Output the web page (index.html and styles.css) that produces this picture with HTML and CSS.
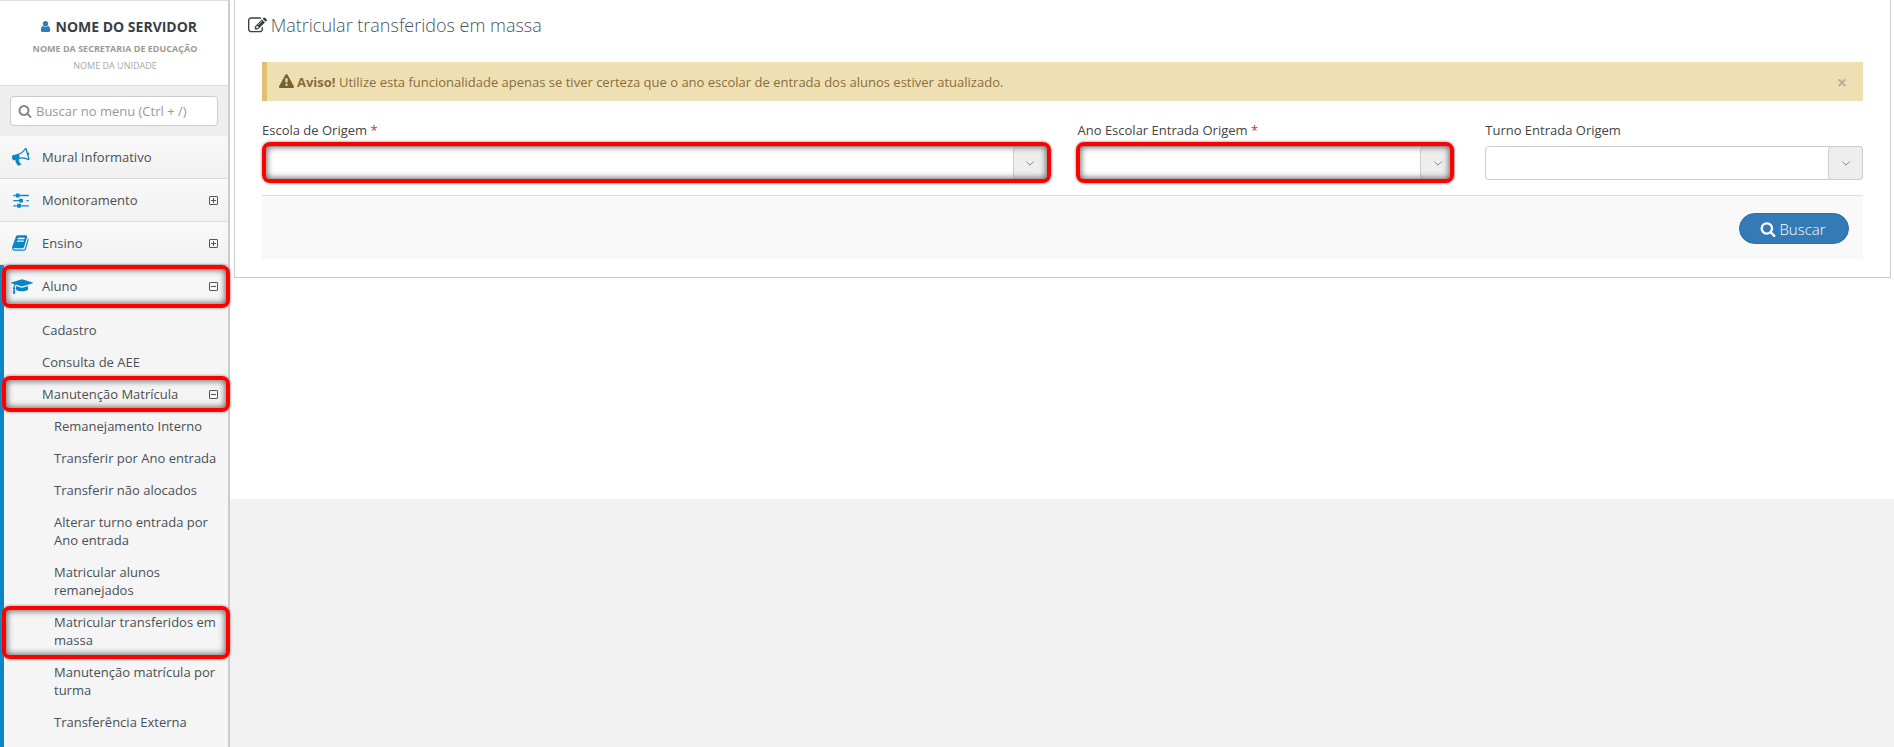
FILE: index.html
```html
<!DOCTYPE html>
<html lang="pt-BR">
<head>
<meta charset="utf-8">
<title>Matricular transferidos em massa</title>
<link rel="stylesheet" href="styles.css">
</head>
<body>
<div class="app">
  <aside class="sidebar">
    <div class="profile">
      <div class="profile-name"><svg class="ic-user" viewBox="0 0 1792 1792"><path d="M1536 1399q0 109-62.5 187t-150.5 78h-854q-88 0-150.5-78t-62.5-187q0-85 8.5-160.5t31.5-152 58.5-131 94-89 134.5-34.5q131 128 313 128t313-128q76 0 134.5 34.5t94 89 58.5 131 31.5 152 8.5 160.5zm-256-887q0 159-112.5 271.5t-271.5 112.5-271.5-112.5-112.5-271.5 112.5-271.5 271.5-112.5 271.5 112.5 112.5 271.5z"/></svg> NOME DO SERVIDOR</div>
      <div class="profile-dept">NOME DA SECRETARIA DE EDUCAÇÃO</div>
      <div class="profile-unit">NOME DA UNIDADE</div>
    </div>
    <div class="menu-search">
      <div class="search-box">
        <svg class="ic-search" viewBox="0 0 1792 1792"><path d="M1216 832q0-185-131.5-316.5t-316.5-131.5-316.5 131.5-131.5 316.5 131.5 316.5 316.5 131.5 316.5-131.5 131.5-316.5zm512 832q0 52-38 90t-90 38q-54 0-90-38l-343-342q-179 124-399 124-143 0-273.5-55.5t-225-150-150-225-55.5-273.5 55.5-273.5 150-225 225-150 273.5-55.5 273.5 55.5 225 150 150 225 55.5 273.5q0 220-124 399l343 343q37 37 37 90z"/></svg>
        <span>Buscar no menu (Ctrl + /)</span>
      </div>
    </div>
    <nav class="menu">
      <div class="menu-item">
        <svg class="menu-icon icon-tilt" viewBox="0 0 1792 1792"><path d="M1664 640q53 0 90.5 37.5t37.5 90.5-37.5 90.5-90.5 37.5v384q0 52-38 90t-90 38q-417-347-812-380-58 19-91 66t-31 100.5 40 92.5q-20 33-23 65.5t6 58 33.5 55 48 50 61.5 50.5q-29 58-111.5 83t-168.5 11.5-132-55.5q-7-23-29.5-87.5t-32-94.5-23-89-15-101 3.5-98.5 22-110.5h-122q-66 0-113-47t-47-113v-192q0-66 47-113t113-47h480q435 0 896-384 52 0 90 38t38 90v384zm-128 604v-954q-394 302-768 343v270q377 42 768 341z"/></svg>
        <span class="menu-label">Mural Informativo</span>
      </div>
      <div class="menu-item">
        <svg class="menu-icon" viewBox="0 0 1792 1792"><path d="M480 1408v128h-352v-128h352zm352-128q26 0 45 19t19 45v256q0 26-19 45t-45 19h-256q-26 0-45-19t-19-45v-256q0-26 19-45t45-19h256zm160-384v128h-864v-128h864zm-640-512v128h-224v-128h224zm1312 1024v128h-736v-128h736zm-960-1152q26 0 45 19t19 45v256q0 26-19 45t-45 19h-256q-26 0-45-19t-19-45v-256q0-26 19-45t45-19h256zm320 512q26 0 45 19t19 45v256q0 26-19 45t-45 19h-256q-26 0-45-19t-19-45v-256q0-26 19-45t45-19h256zm640 128v128h-224v-128h224zm0-512v128h-864v-128h864z"/></svg>
        <span class="menu-label">Monitoramento</span>
        <span class="toggle toggle-plus"></span>
      </div>
      <div class="menu-item">
        <svg class="menu-icon" viewBox="0 0 1792 1792"><path d="M1639 478q40 57 18 129l-275 906q-19 64-76.5 107.5t-122.5 43.5h-923q-77 0-148.5-53.5t-99.5-131.5q-24-67-2-127 0-4 3-27t4-37q1-8-3-21.5t-3-19.5q2-11 8-21t16.5-23.5 16.5-23.5q23-38 45-91.5t30-91.5q3-10 .5-30t-.5-28q3-11 17-28t17-23q21-36 42-92t25-90q1-9-2.5-32t.5-28q4-13 22-30.5t22-22.5q19-26 42.5-84.5t27.5-96.5q1-8-3-25.5t-2-26.5q2-8 9-18t18-23 17-21q8-12 16.5-30.5t15-35 16-36 19.5-32 26.5-23.5 36-11.5 47.5 5.5l-1 3q38-9 51-9h761q74 0 114 56t18 130l-274 906q-36 119-71.5 153.5t-128.5 34.5h-869q-27 0-38 15-11 16-1 43 24 70 144 70h923q29 0 56-15.5t35-41.5l300-987q7-22 5-57 38 15 59 43zm-1064 2q-4 13 2 22.5t20 9.5h608q13 0 25.5-9.5t16.5-22.5l21-64q4-13-2-22.5t-20-9.5h-608q-13 0-25.5 9.5t-16.5 22.5zm-83 256q-4 13 2 22.5t20 9.5h608q13 0 25.5-9.5t16.5-22.5l21-64q4-13-2-22.5t-20-9.5h-608q-13 0-25.5 9.5t-16.5 22.5z"/></svg>
        <span class="menu-label">Ensino</span>
        <span class="toggle toggle-plus"></span>
      </div>
      <div class="menu-item active hl hl-aluno">
        <svg class="menu-icon menu-icon-wide" viewBox="0 0 2304 1792"><path d="M1774 836l18 316q4 69-82 128t-235 93.5-323 34.5-323-34.5-235-93.5-82-128l18-316 574 181q22 7 48 7t48-7zm530-324q0 23-22 31l-1120 352q-4 1-10 1t-10-1l-652-206q-43 34-71 111.5t-34 178.5q63 36 63 109 0 69-58 107l58 433q2 14-8 25-9 11-24 11h-192q-15 0-24-11-10-11-8-25l58-433q-58-38-58-107 0-73 65-111 11-207 98-330l-333-104q-22-8-22-31t22-31l1120-352q4-1 10-1t10 1l1120 352q22 8 22 31z"/></svg>
        <span class="menu-label">Aluno</span>
        <span class="toggle"></span>
      </div>
      <div class="submenu">
        <div class="sub-item">Cadastro</div>
        <div class="sub-item">Consulta de AEE</div>
        <div class="sub-item sub-parent hl hl-manut">
          <span>Manutenção Matrícula</span>
          <span class="toggle"></span>
        </div>
        <div class="sub-item deep">Remanejamento Interno</div>
        <div class="sub-item deep">Transferir por Ano entrada</div>
        <div class="sub-item deep">Transferir não alocados</div>
        <div class="sub-item deep">Alterar turno entrada por Ano entrada</div>
        <div class="sub-item deep">Matricular alunos remanejados</div>
        <div class="sub-item deep hl hl-transf">Matricular transferidos em massa</div>
        <div class="sub-item deep">Manutenção matrícula por turma</div>
        <div class="sub-item deep">Transferência Externa</div>
      </div>
    </nav>
  </aside>
  <main class="main">
    <div class="content">
      <section class="panel">
        <h1 class="panel-title"><svg class="ic-edit" viewBox="0 0 1792 1792"><path d="M888 1184l116-116-152-152-116 116v56h96v96h56zm440-720q-16-16-33 1l-350 350q-17 17-1 33t33-1l350-350q17-17 1-33zm80 594v190q0 119-84.5 203.5t-203.5 84.5h-832q-119 0-203.5-84.5t-84.5-203.5v-832q0-119 84.5-203.5t203.5-84.5h832q63 0 117 25 15 7 18 23 3 17-9 29l-49 49q-14 14-32 8-23-6-45-6h-832q-66 0-113 47t-47 113v832q0 66 47 113t113 47h832q66 0 113-47t47-113v-126q0-13 9-22l64-64q15-15 35-7t20 29zm-96-738l288 288-672 672h-288v-288zm444 132l-92 92-288-288 92-92q28-28 68-28t68 28l152 152q28 28 28 68t-28 68z"/></svg> Matricular transferidos em massa</h1>
        <div class="alert">
          <svg class="ic-warn" viewBox="0 0 1792 1792"><path d="M1024 1375v-190q0-14-9.5-23.5t-22.5-9.5h-192q-13 0-22.5 9.5t-9.5 23.5v190q0 14 9.5 23.5t22.5 9.5h192q13 0 22.5-9.5t9.5-23.5zm-2-374l18-459q0-12-10-19-13-11-24-11h-220q-11 0-24 11-10 7-10 21l17 457q0 10 10 16.5t24 6.5h185q14 0 23.5-6.5t10.5-16.5zm-14-934l768 1408q35 63-2 126-17 29-46.5 46t-63.5 17h-1536q-34 0-63.5-17t-46.5-46q-37-63-2-126l768-1408q17-31 47-49t65-18 65 18 47 49z"/></svg>
          <span class="alert-text"><strong>Aviso!</strong> Utilize esta funcionalidade apenas se tiver certeza que o ano escolar de entrada dos alunos estiver atualizado.</span>
          <span class="alert-close">×</span>
        </div>
        <div class="form-row">
          <div class="field">
            <label class="field-label">Escola de Origem <em>*</em></label>
            <div class="select hl hl-sel1"><span class="select-arrow"><svg viewBox="0 0 12 8"><path d="M1.5 1.5 6 6 10.5 1.5"/></svg></span></div>
          </div>
          <div class="field">
            <label class="field-label">Ano Escolar Entrada Origem <em>*</em></label>
            <div class="select hl hl-sel2"><span class="select-arrow"><svg viewBox="0 0 12 8"><path d="M1.5 1.5 6 6 10.5 1.5"/></svg></span></div>
          </div>
          <div class="field">
            <label class="field-label">Turno Entrada Origem</label>
            <div class="select"><span class="select-arrow"><svg viewBox="0 0 12 8"><path d="M1.5 1.5 6 6 10.5 1.5"/></svg></span></div>
          </div>
        </div>
        <div class="form-footer">
          <button class="btn-search"><svg class="ic-btn" viewBox="0 0 1792 1792"><path d="M1216 832q0-185-131.5-316.5t-316.5-131.5-316.5 131.5-131.5 316.5 131.5 316.5 316.5 131.5 316.5-131.5 131.5-316.5zm512 832q0 52-38 90t-90 38q-54 0-90-38l-343-342q-179 124-399 124-143 0-273.5-55.5t-225-150-150-225-55.5-273.5 55.5-273.5 150-225 225-150 273.5-55.5 273.5 55.5 225 150 150 225 55.5 273.5q0 220-124 399l343 343q37 37 37 90z"/></svg> Buscar</button>
        </div>
      </section>
    </div>
    <div class="page-fill"></div>
  </main>
</div>
</body>
</html>
```

FILE: styles.css
```css
* { box-sizing: border-box; }
html, body { margin: 0; height: 100%; overflow: hidden; }
body { font-family: "Open Sans", "Noto Sans", sans-serif; font-size: 13px; color: #444; background: #fff; }
.app { display: flex; height: 747px; }

.sidebar { width: 230px; flex: none; background: #f5f5f5; border-right: 2px solid #ccc; border-top: 1px solid #ddd; }
.profile { height: 85px; background: #fff; border-bottom: 1px solid #ddd; padding: 16px 0 0 8px; text-align: center; }
.profile-name { font-size: 14px; font-weight: 700; color: #3a3f47; line-height: 20px; }
.ic-user { width: 13px; height: 13px; fill: #2a7fb8; vertical-align: -1px; }
.profile-dept { font-size: 9px; font-weight: 700; color: #a09a92; line-height: 14px; margin-top: 5px; padding-right: 6px; }
.profile-unit { font-size: 9px; color: #a8a8a8; line-height: 14px; margin-top: 3px; padding-right: 6px; }
.menu-search { height: 50px; background: #eee; padding: 10px 10px 0 10px; }
.search-box { height: 30px; background: #fff; border: 1px solid #ccc; border-radius: 4px; display: flex; align-items: center; padding-left: 7px; color: #999; font-size: 13px; gap: 4px; }
.ic-search { width: 14px; height: 14px; fill: #888; }

.menu-item { position: relative; height: 43px; display: flex; align-items: center; background: linear-gradient(#f9f9f9, #f1f1f1); border-bottom: 1px solid #ddd; padding: 0 10px 0 12px; }
.menu-icon { width: 18px; height: 18px; fill: #0a86c7; flex: none; }
.icon-tilt { transform: rotate(-15deg); }
.menu-icon-wide { width: 22px; height: 17px; margin-left: -1px; }
.menu-label { margin-left: 12px; flex: 1; color: #4a4f57; }
.menu-item.active { height: 42px; background: #f7f7f7; border-bottom: 0; border-left: 4px solid #0a86c7; padding-left: 8px; }
.menu-icon-wide + .menu-label { margin-left: 9px; }
.toggle { width: 9px; height: 9px; border: 1px solid #555; border-radius: 1px; display: block; position: relative; flex: none; margin-right: 0; }
.toggle::before { content: ""; position: absolute; left: 1px; right: 1px; top: 3px; height: 1px; background: #555; }
.toggle-plus::after { content: ""; position: absolute; top: 1px; bottom: 1px; left: 3px; width: 1px; background: #555; }

.submenu { background: #f5f5f5; border-left: 4px solid #0a86c7; padding-top: 7px; height: 440px; overflow: visible; }
.sub-item { position: relative; padding: 7px 10px 7px 38px; line-height: 18px; color: #4a4f57; }
.sub-item.deep { padding-left: 50px; padding-right: 8px; }
.sub-parent { display: flex; justify-content: space-between; align-items: center; }

.hl::after { content: ""; position: absolute; border: 4px solid #f00; border-radius: 8px; box-shadow: inset 0 0 6px 1px #666, 0 0 3px #777; pointer-events: none; z-index: 2; }
.hl-aluno::after { left: -2px; right: -2px; top: 0; bottom: -1px; }
.hl-manut::after { left: -2px; right: -2px; top: -2px; bottom: -2px; }
.hl-transf::after { left: -2px; right: -2px; top: 0; bottom: -3px; }
.hl-sel1::after { left: -1px; right: -4px; top: -5px; bottom: -4px; }
.hl-sel2::after { left: -3px; right: 0; top: -5px; bottom: -4px; }

.main { flex: 1; min-width: 0; display: flex; flex-direction: column; }
.content { height: 499px; background: #fff; padding: 0 3px 0 4px; flex: none; }
.page-fill { flex: 1; background: #f1f1f1; }
.panel { height: 278px; border: 1px solid #ccc; border-top: 0; padding: 0 27px; background: #fff; }
.panel-title { margin: 0 -14px; height: 62px; padding-top: 12px; font-size: 18px; font-weight: 300; line-height: 26px; color: #4a545e; }
.ic-edit { width: 19px; height: 19px; fill: #3a3f47; vertical-align: -3px; margin-right: -1px; }
.alert { height: 39px; background: #efe0b3; border-left: 5px solid #e2bd74; display: flex; align-items: center; padding: 0 16px 0 12px; color: #8a6d3b; font-size: 13px; }
.ic-warn { width: 15px; height: 15px; fill: #7a5f30; margin-right: 3px; flex: none; }
.alert-text { flex: 1; }
.alert-close { font-size: 18px; font-weight: 700; color: #b8b09a; line-height: 1; }
.form-row { display: grid; grid-template-columns: calc(50% - 15px) 1fr 1fr; gap: 30px; margin-top: 20px; }
.field-label { display: block; line-height: 18px; margin-bottom: 7px; color: #444; }
.field-label em { color: #e22; font-style: normal; }
.select { position: relative; height: 34px; border: 1px solid #ccc; border-radius: 4px; background: #fff; display: flex; justify-content: flex-end; }
.select-arrow { width: 35px; margin: -1px -1px -1px 0; background: #eee; border: 1px solid #ccc; border-radius: 4px; display: flex; align-items: center; justify-content: center; }
.select-arrow svg { width: 10px; height: 7px; fill: none; stroke: #888; stroke-width: 1.2; }
.form-footer { margin-top: 15px; height: 64px; background: #f9f9f9; border-top: 1px solid #ddd; display: flex; justify-content: flex-end; align-items: flex-start; padding: 17px 14px 0 0; }
.btn-search { width: 110px; height: 31px; border: 1px solid #2e6da4; border-radius: 16px; background: #337ab7; color: #fff; font-family: inherit; font-size: 15px; font-weight: 300; display: flex; align-items: center; justify-content: center; gap: 3px; padding: 0 2px 0 0; }
.ic-btn { width: 16px; height: 16px; fill: #fff; }
```
